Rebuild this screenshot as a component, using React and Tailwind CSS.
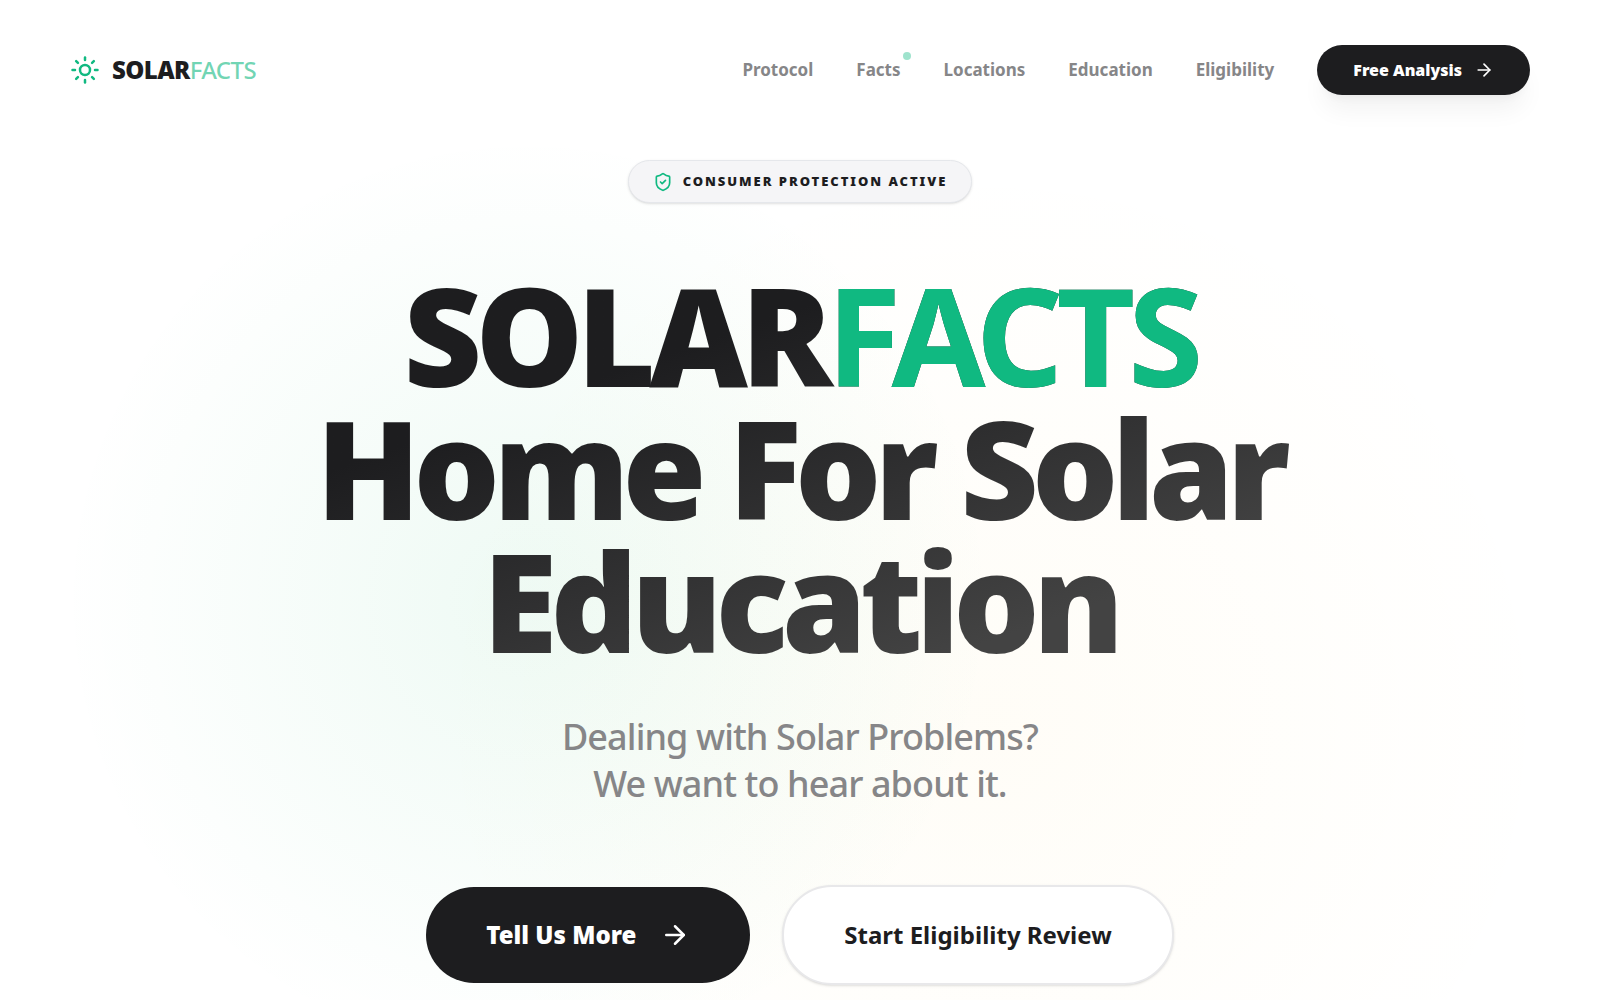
import React from 'react';
import { Sun, ShieldCheck, ArrowRight } from 'lucide-react';

const links = [
  { label: 'Protocol', href: '#protocol' },
  { label: 'Facts', href: '#facts', dot: true },
  { label: 'Locations', href: '#locations' },
  { label: 'Education', href: '#education' },
  { label: 'Eligibility', href: '#eligibility' },
];

const Navbar = () => (
  <header className="flex items-center justify-between px-[70px] pt-[45px]">
    <a href="#home" className="flex items-center gap-3 text-2xl tracking-tight">
      <Sun size={30} className="text-[#10b981]" />
      <span>
        <span className="font-black">SOLAR</span>
        <span className="font-medium text-[#10b981]/60">FACTS</span>
      </span>
    </a>
    <nav className="flex items-center gap-[43px]">
      {links.map((link) => (
        <a key={link.label} href={link.href} className="relative text-[17px] leading-6 font-bold text-[#868688]">
          {link.label}
          {link.dot && <span className="absolute -top-1.5 -right-2.5 size-2 rounded-full bg-[#10b981]/40" />}
        </a>
      ))}
      <button className="flex h-[50px] items-center gap-3 rounded-full bg-[#1d1d1f] px-9 text-base font-black text-white shadow-xl shadow-black/5">
        Free Analysis
        <ArrowRight size={20} />
      </button>
    </nav>
  </header>
);

const Hero = () => (
  <main className="flex flex-col items-center pt-[65px] text-center">
    <div className="flex h-[43px] items-center gap-2.5 rounded-full border border-gray-200 bg-[#f5f5f7] px-6 shadow-sm">
      <ShieldCheck size={20} className="text-[#10b981]" />
      <span className="text-[13px] font-black tracking-[0.15em] uppercase">Consumer Protection Active</span>
    </div>

    <h1 className="mt-[65px] max-w-6xl bg-gradient-to-br from-[#1d1d1f] from-30% to-[#434343] to-80% bg-clip-text text-[136px] leading-[133px] font-black tracking-tighter text-transparent">
      SOLAR<span className="font-bold text-[#10b981]">FACTS</span>
      <br />
      Home For Solar Education
    </h1>

    <p className="mt-[46px] text-4xl leading-[47px] font-medium tracking-tight text-[#868688]">
      Dealing with Solar Problems?
      <br />
      We want to hear about it.
    </p>

    <div className="mt-[78px] flex items-center gap-8 pb-4">
      <button className="flex h-24 items-center gap-6 rounded-full bg-[#1d1d1f] px-[60px] text-2xl font-black text-white">
        Tell Us More
        <ArrowRight size={30} />
      </button>
      <button className="h-[100px] rounded-full border-2 border-[#e8e8ea] bg-white px-[60px] text-2xl font-bold shadow-sm">
        Start Eligibility Review
      </button>
    </div>
  </main>
);

const App = () => (
  <div className="min-h-screen bg-white bg-[radial-gradient(circle_at_33%_60%,rgba(16,185,100,0.07),transparent_38%),radial-gradient(circle_at_62%_72%,rgba(250,190,20,0.035),transparent_46%)] font-['Noto_Sans',sans-serif] text-[#1d1d1f]">
    <Navbar />
    <Hero />
  </div>
);

export default App;
